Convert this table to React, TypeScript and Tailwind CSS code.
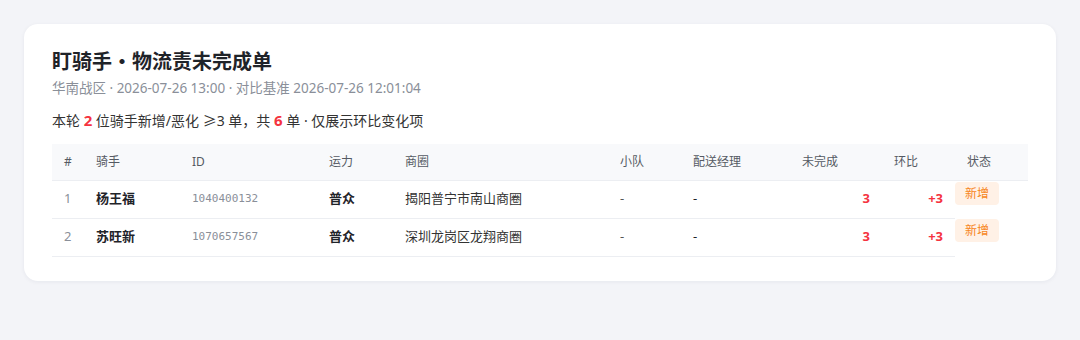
import React from "react";

const ROWS = [
  { no: 1, name: "杨王福", id: "1040400132", cap: "普众", area: "揭阳普宁市南山商圈", team: "-", mgr: "-", open: 3, diff: "+3", status: "新增" },
  { no: 2, name: "苏旺新", id: "1070657567", cap: "普众", area: "深圳龙岗区龙翔商圈", team: "-", mgr: "-", open: 3, diff: "+3", status: "新增" },
];

const COLS = [32, 96, 137, 76, 215, 73, 109, 92, 73, 73];
const HEADS = ["#", "骑手", "ID", "运力", "商圈", "小队", "配送经理", "未完成", "环比", "状态"];

export default function App() {
  return (
    <div
      className="min-h-[340px] bg-[#f3f4f8] p-6"
      style={{ fontFamily: '"Noto Sans", "Noto Sans CJK SC", sans-serif' }}
    >
      <div className="rounded-[14px] bg-white px-7 pt-6 pb-6 shadow-[0_1px_4px_rgba(20,30,60,0.06)]">
        <h1 className="text-[20px] font-bold leading-7 text-[#1f2329]">盯骑手・物流责未完成单</h1>
        <p className="mt-0.5 text-[13.5px] leading-5 text-[#8a8f99]">
          华南战区 · 2026-07-26 13:00 · 对比基准 2026-07-26 12:01:04
        </p>
        <p className="mt-[13px] h-5 text-[14px] leading-5 text-[#333]">
          本轮 <span className="text-[15px] leading-none font-bold text-[#f5333f]">2</span> 位骑手新增/恶化 ≥3 单，共{" "}
          <span className="text-[15px] leading-none font-bold text-[#f5333f]">6</span> 单 · 仅展示环比变化项
        </p>

        <table className="mt-[13px] w-full table-fixed border-collapse text-left">
          <colgroup>
            {COLS.map((w, i) => (
              <col key={i} style={{ width: w }} />
            ))}
          </colgroup>
          <thead>
            <tr className="bg-[#f8f9fb]">
              {HEADS.map((h) => (
                <th
                  key={h}
                  className="h-9 border-b border-[#eceef2] px-3 text-[12px] font-normal text-[#555a63]"
                >
                  {h}
                </th>
              ))}
            </tr>
          </thead>
          <tbody>
            {ROWS.map((r) => (
              <tr key={r.no}>
                <td className="h-[38px] border-b border-[#eceef2] px-3 text-[13px] text-[#8a8f99]">{r.no}</td>
                <td className="border-b border-[#eceef2] px-3 text-[13px] font-bold text-[#1f2329]">{r.name}</td>
                <td
                  className="border-b border-[#eceef2] px-3 text-[11px] text-[#8a8f99]"
                  style={{ fontFamily: '"DejaVu Sans Mono", monospace' }}
                >
                  {r.id}
                </td>
                <td className="border-b border-[#eceef2] px-3 text-[13px] font-bold text-[#1f2329]">{r.cap}</td>
                <td className="border-b border-[#eceef2] px-3 text-[13px] text-[#333]">{r.area}</td>
                <td className="border-b border-[#eceef2] px-3 text-[13px] text-[#555]">{r.team}</td>
                <td className="border-b border-[#eceef2] px-3 text-[13px] text-[#1f2329]">{r.mgr}</td>
                <td className="border-b border-[#eceef2] px-3 text-right text-[13px] font-bold text-[#f5333f]">{r.open}</td>
                <td className="border-b border-[#eceef2] px-3 text-right text-[13px] font-bold text-[#f5333f]">{r.diff}</td>
                <td className="p-0 pt-px align-top">
                  <div className="flex">
                    <span className="rounded-[4px] bg-[#fff1e6] px-2.5 text-[12px] leading-[23px] text-[#f7861c]">
                      {r.status}
                    </span>
                  </div>
                </td>
              </tr>
            ))}
          </tbody>
        </table>
      </div>
    </div>
  );
}
